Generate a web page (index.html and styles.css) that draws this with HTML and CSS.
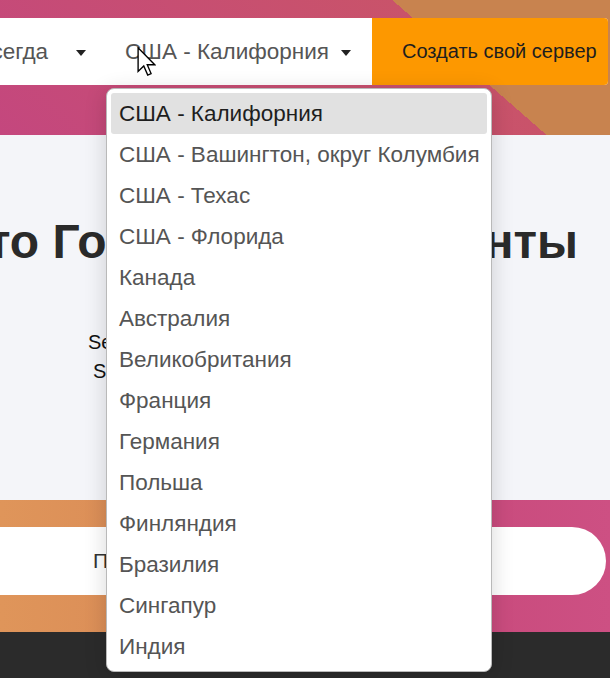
FILE: index.html
```html
<!DOCTYPE html>
<html lang="ru">
<head>
<meta charset="utf-8">
<title>Серверы</title>
<link rel="stylesheet" href="styles.css">
</head>
<body>
<div class="page">
  <header class="hero-top">
    <nav class="navbar">
      <div class="nav-select nav-select--period"><span class="nav-label">Навсегда</span><span class="caret"></span></div>
      <div class="nav-select nav-select--region"><span class="nav-label">США - Калифорния</span><span class="caret"></span></div>
      <a class="btn-create" href="#">Создать свой сервер</a>
    </nav>
  </header>

  <section class="content">
    <h2 class="title"><span>Что Говорят Нам Клиенты</span></h2>
    <p class="sub"><span class="sub-line">Servers</span><span class="sub-line sub-line--2">Status</span></p>
  </section>

  <section class="search-band">
    <div class="pill"><span class="pill-text">Поиск серверов</span></div>
  </section>

  <footer class="footer"></footer>

  <ul class="dropdown">
    <li class="dropdown-item is-active">США - Калифорния</li>
    <li class="dropdown-item">США - Вашингтон, округ Колумбия</li>
    <li class="dropdown-item">США - Техас</li>
    <li class="dropdown-item">США - Флорида</li>
    <li class="dropdown-item">Канада</li>
    <li class="dropdown-item">Австралия</li>
    <li class="dropdown-item">Великобритания</li>
    <li class="dropdown-item">Франция</li>
    <li class="dropdown-item">Германия</li>
    <li class="dropdown-item">Польша</li>
    <li class="dropdown-item">Финляндия</li>
    <li class="dropdown-item">Бразилия</li>
    <li class="dropdown-item">Сингапур</li>
    <li class="dropdown-item">Индия</li>
  </ul>

  <svg class="cursor" width="20" height="30" viewBox="0 0 12 19" aria-hidden="true">
    <path d="M0.5 0.5 L0.5 16 L4.2 12.4 L6.8 18.4 L9 17.4 L6.5 11.6 L11.4 11.6 Z" fill="#fff" stroke="#000" stroke-width="0.9" stroke-linejoin="miter"/>
  </svg>
</div>
</body>
</html>
```

FILE: styles.css
```css
* { box-sizing: border-box; }

html, body {
  margin: 0;
  padding: 0;
}

body {
  width: 610px;
  height: 678px;
  overflow: hidden;
  font-family: "Liberation Sans", Arial, sans-serif;
  background: #2b2b2b;
}

.page {
  position: relative;
  width: 610px;
  height: 678px;
  overflow: hidden;
  display: flex;
  flex-direction: column;
}

/* ---------- header ---------- */
.hero-top {
  height: 135px;
  padding-top: 18px;
  background: linear-gradient(41.2deg, #c4477e 0px, #c9536a 360px, #c8834f 360px, #c8834f 100%);
}

.navbar {
  height: 67px;
  margin-right: 2px;
  display: flex;
  justify-content: flex-end;
  align-items: stretch;
  background: #fff;
  border-radius: 0 4px 4px 0;
}

.nav-select {
  flex: none;
  display: flex;
  align-items: center;
  color: #555;
  font-size: 22.5px;
  white-space: nowrap;
}

.nav-select--period {
  padding-right: 39px;
}

.nav-select--period .caret {
  margin-left: 28px;
}

.nav-select--region {
  padding-right: 21px;
}

.nav-select--region .caret {
  margin-left: 12px;
}

.caret {
  width: 0;
  height: 0;
  border-left: 5.5px solid transparent;
  border-right: 5.5px solid transparent;
  border-top: 6px solid #222;
  margin-top: 2px;
}

.btn-create {
  flex: none;
  width: 236px;
  display: flex;
  align-items: center;
  padding-left: 30px;
  background: #fd9800;
  color: #1e1e1e;
  font-size: 20px;
  text-decoration: none;
  white-space: nowrap;
  border-radius: 0 4px 4px 0;
}

/* ---------- content ---------- */
.content {
  height: 365px;
  background: #f4f5f9;
  padding-top: 78px;
}

.title {
  margin: 0;
  height: 58px;
  padding-right: 32px;
  display: flex;
  justify-content: flex-end;
  font-size: 48px;
  line-height: 58px;
  font-weight: 700;
  color: #2a2a2a;
  white-space: nowrap;
}

.sub {
  margin: 57px 0 0 88px;
  display: flex;
  flex-direction: column;
  font-size: 20px;
  line-height: 29px;
  color: #111;
}

.sub-line--2 {
  padding-left: 5px;
}

/* ---------- search band ---------- */
.search-band {
  height: 132px;
  padding-top: 27px;
  background: linear-gradient(90deg, #df955a 0%, #dc8f58 18%, #c94b7d 78%, #cd5083 100%);
}

.pill {
  height: 68px;
  margin-left: -40px;
  margin-right: 4px;
  background: #fff;
  border-radius: 0 34px 34px 0;
  display: flex;
  align-items: center;
  padding-left: 133px;
  font-size: 21px;
  color: #333;
}

/* ---------- footer ---------- */
.footer {
  flex: 1;
  background: #2b2b2b;
}

/* ---------- dropdown overlay ---------- */
.dropdown {
  position: absolute;
  left: 106px;
  top: 88px;
  width: 386px;
  margin: 0;
  padding: 4px;
  list-style: none;
  background: #fff;
  border: 1px solid #b9b9b9;
  border-radius: 8px;
  box-shadow: 0 4px 22px rgba(0, 0, 0, 0.16);
}

.dropdown-item {
  height: 41px;
  padding-left: 8px;
  display: flex;
  align-items: center;
  font-size: 22.5px;
  color: #555;
  white-space: nowrap;
  border-radius: 3px;
}

.dropdown-item.is-active {
  background: #e1e1e1;
  color: #1e1e1e;
}

.cursor {
  position: absolute;
  left: 137px;
  top: 47px;
  width: 19px;
  height: 29px;
}
```
